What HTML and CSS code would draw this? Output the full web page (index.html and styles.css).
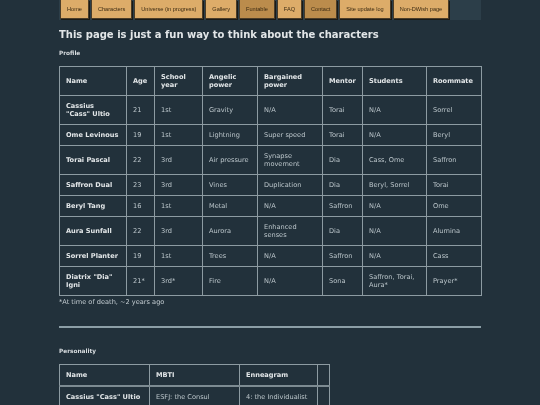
FILE: index.html
```html
<!DOCTYPE html>
<html>
<head>
<meta charset="utf-8">
<link rel="stylesheet" href="styles.css">
</head>
<body>
<div class="page">
  <nav class="nav">
    <a class="tab">Home</a>
    <a class="tab">Characters</a>
    <a class="tab">Universe (in progress)</a>
    <a class="tab">Gallery</a>
    <a class="tab active">Funtable</a>
    <a class="tab">FAQ</a>
    <a class="tab active">Contact</a>
    <a class="tab">Site update log</a>
    <a class="tab">Non-DWish page</a>
  </nav>
  <h1 class="title">This page is just a fun way to think about the characters</h1>
  <h2 class="section">Profile</h2>
  <table class="grid profile">
    <colgroup>
      <col class="c67"><col class="c28"><col class="c48"><col class="c55"><col class="c65"><col class="c40"><col class="c64"><col class="c55">
    </colgroup>
    <tr><th>Name</th><th>Age</th><th>School year</th><th>Angelic power</th><th>Bargained power</th><th>Mentor</th><th>Students</th><th>Roommate</th></tr>
    <tr><th>Cassius "Cass" Ultio</th><td>21</td><td>1st</td><td>Gravity</td><td>N/A</td><td>Torai</td><td>N/A</td><td>Sorrel</td></tr>
    <tr><th>Ome Levinous</th><td>19</td><td>1st</td><td>Lightning</td><td>Super speed</td><td>Torai</td><td>N/A</td><td>Beryl</td></tr>
    <tr><th>Torai Pascal</th><td>22</td><td>3rd</td><td>Air pressure</td><td>Synapse movement</td><td>Dia</td><td>Cass, Ome</td><td>Saffron</td></tr>
    <tr><th>Saffron Dual</th><td>23</td><td>3rd</td><td>Vines</td><td>Duplication</td><td>Dia</td><td>Beryl, Sorrel</td><td>Torai</td></tr>
    <tr><th>Beryl Tang</th><td>16</td><td>1st</td><td>Metal</td><td>N/A</td><td>Saffron</td><td>N/A</td><td>Ome</td></tr>
    <tr><th>Aura Sunfall</th><td>22</td><td>3rd</td><td>Aurora</td><td>Enhanced senses</td><td>Dia</td><td>N/A</td><td>Alumina</td></tr>
    <tr><th>Sorrel Planter</th><td>19</td><td>1st</td><td>Trees</td><td>N/A</td><td>Saffron</td><td>N/A</td><td>Cass</td></tr>
    <tr><th>Diatrix "Dia" Igni</th><td>21*</td><td>3rd*</td><td>Fire</td><td>N/A</td><td>Sona</td><td>Saffron, Torai, Aura*</td><td>Prayer*</td></tr>
  </table>
  <p class="note">*At time of death, ~2 years ago</p>
  <hr class="rule">
  <h2 class="section second">Personality</h2>
  <table class="grid personality">
    <colgroup>
      <col class="c90"><col class="c90"><col class="c78"><col class="c12">
    </colgroup>
    <tr class="head"><th>Name</th><th>MBTI</th><th>Enneagram</th><th></th></tr>
    <tr><th>Cassius "Cass" Ultio</th><td>ESFJ: the Consul</td><td>4: the Individualist</td><td></td></tr>
    <tr><th>Ome Levinous</th><td>ENTP</td><td>7</td><td></td></tr>
  </table>
</div>
</body>
</html>
```
FILE: styles.css
```css
html, body {
  margin: 0;
  padding: 0;
  background: #22313b;
  height: 405px;
  overflow: hidden;
}
body {
  font-family: "DejaVu Sans", Verdana, sans-serif;
  color: #c3ccd1;
}
.page {
  width: 422px;
  margin: 0 auto;
  will-change: transform;
}
.nav {
  display: flex;
  gap: 2px;
  height: 20px;
  background: #2c3e49;
  align-items: flex-start;
}
.tab {
  font-family: "Liberation Sans", Arial, sans-serif;
  font-size: 5.6px;
  color: #3b2a12;
  background: #ddac69;
  border: 1px solid #4a3c28;
  border-top: none;
  height: 19px;
  line-height: 18px;
  padding: 0 6px;
  box-sizing: border-box;
  box-shadow: 1px 1px 0 #1a1a16;
  white-space: nowrap;
}
.tab:first-child {
  margin-left: 1px;
}
.tab.active {
  background: #bb8c4c;
}
.title {
  font-size: 10px;
  font-weight: bold;
  color: #e2e6e8;
  margin: 9px 0 0 0;
  line-height: 12px;
}
.section {
  font-size: 5.8px;
  font-weight: bold;
  color: #d8dde0;
  margin: 8px 0 0 0;
  line-height: 8px;
}
.grid {
  border-collapse: collapse;
  table-layout: fixed;
  font-size: 6.6px;
  margin-top: 9px;
}
.profile {
  width: 422px;
}
.personality {
  width: 270px;
}
.c67 { width: 67px; }
.c28 { width: 28px; }
.c48 { width: 48px; }
.c55 { width: 55px; }
.c65 { width: 65px; }
.c40 { width: 40px; }
.c64 { width: 64px; }
.c90 { width: 90px; }
.c78 { width: 78px; }
.c12 { width: 12px; }
.grid th, .grid td {
  border: 1px solid #8d9ba2;
  padding: 6px 6px;
  text-align: left;
  vertical-align: middle;
  line-height: 8px;
}
.grid th {
  font-weight: bold;
  color: #e2e6e8;
}
.grid td {
  color: #bcc6cb;
}
.personality .head th {
  border-bottom: 2px solid #7d8b92;
}
.note {
  font-size: 6.6px;
  margin: 2px 0 0 0;
  line-height: 8px;
  color: #c3ccd1;
}
.rule {
  border: none;
  border-top: 2px solid #8c9ea6;
  margin: 20px 0 0 0;
  height: 0;
}
.second {
  margin-top: 19px;
}
```
